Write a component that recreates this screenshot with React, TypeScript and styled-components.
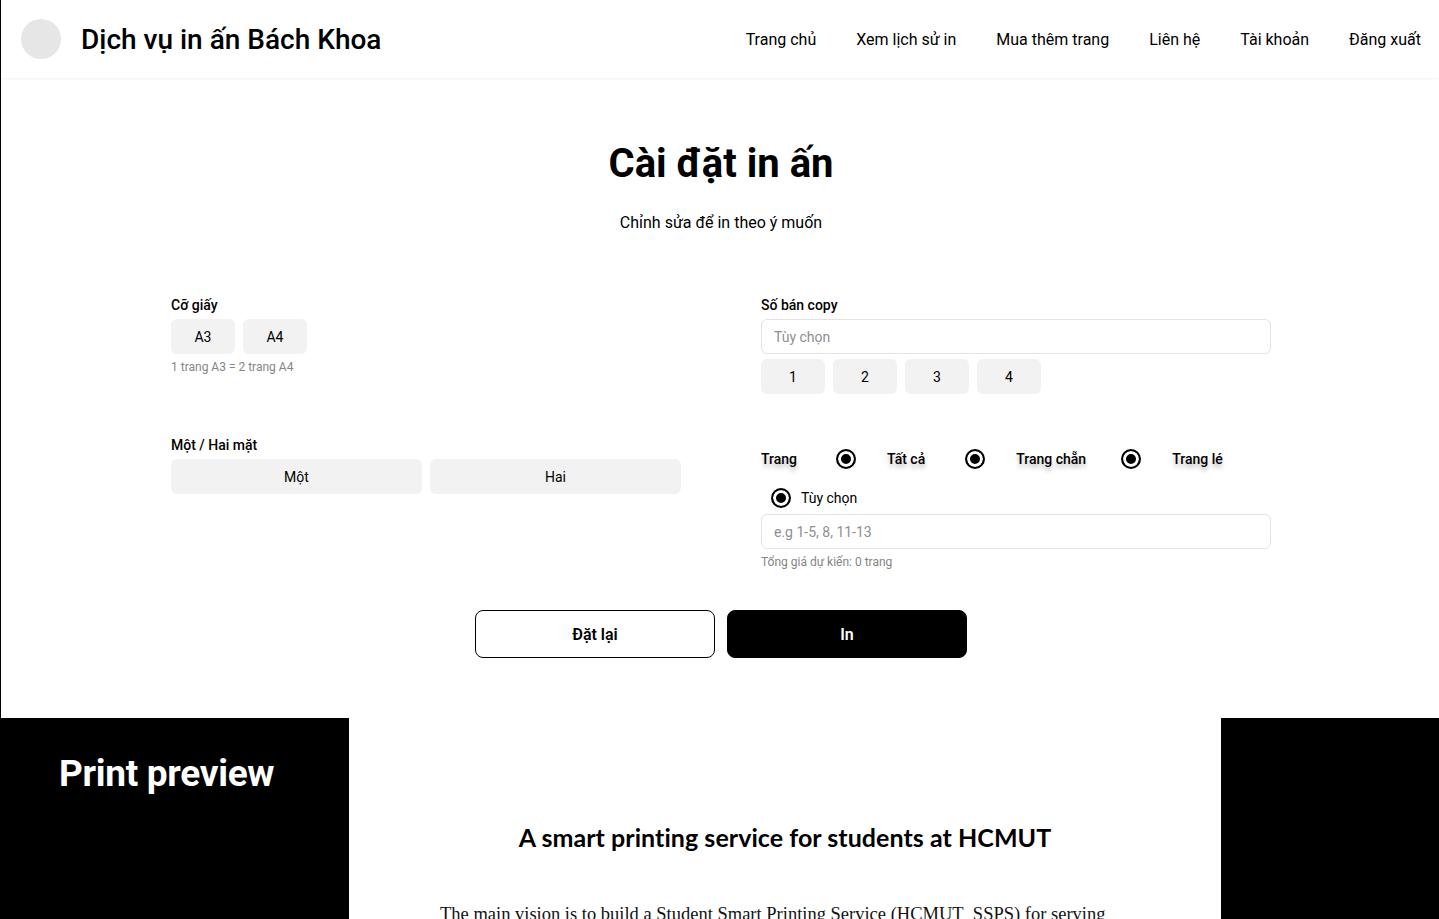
import React from "react";
import styled, { createGlobalStyle } from "styled-components";

const GlobalStyle = createGlobalStyle`
  html, body { margin: 0; padding: 0; background: #fff; }
  body { font-family: Roboto, "Noto Sans", "Liberation Sans", sans-serif; color: #000; }
  * { box-sizing: border-box; }
`;

const Upper = styled.div`
  border-left: 1px solid #000;
`;

const Header = styled.header`
  height: 78px;
  display: flex;
  align-items: center;
  justify-content: space-between;
  padding: 0 18px 0 20px;
  box-shadow: 0 1px 3px rgba(0, 0, 0, 0.06);
`;

const Brand = styled.div`
  display: flex;
  align-items: center;
  gap: 20px;
`;

const Logo = styled.div`
  width: 40px;
  height: 40px;
  border-radius: 50%;
  background: #e6e6e6;
`;

const BrandName = styled.div`
  font-size: 28px;
  font-weight: 500;
`;

const Nav = styled.nav`
  display: flex;
  gap: 40px;
`;

const NavLink = styled.a`
  font-size: 16px;
  color: #000;
  text-decoration: none;
`;

const Main = styled.main`
  display: flex;
  flex-direction: column;
  align-items: center;
  padding: 62px 0 60px 2px;
`;

const Title = styled.h1`
  margin: 0;
  font-size: 40px;
  font-weight: 700;
  line-height: 47px;
`;

const Subtitle = styled.p`
  margin: 26px 0 0;
  font-size: 16px;
  line-height: 19px;
`;

const Form = styled.div`
  margin-top: 65px;
  display: grid;
  grid-template-columns: 510px 510px;
  column-gap: 80px;
`;

const Column = styled.div`
  display: flex;
  flex-direction: column;
`;

const Group = styled.div<{ $top?: number }>`
  display: flex;
  flex-direction: column;
  margin-top: ${(p) => p.$top ?? 0}px;
`;

const Label = styled.div`
  font-size: 14px;
  font-weight: 500;
  line-height: 16px;
  margin-bottom: 6px;
`;

const ButtonRow = styled.div<{ $top?: number }>`
  display: flex;
  gap: 8px;
  margin-top: ${(p) => p.$top ?? 0}px;
`;

const Choice = styled.button<{ $wide?: boolean }>`
  width: ${(p) => (p.$wide ? "251px" : "64px")};
  flex: ${(p) => (p.$wide ? "1" : "none")};
  height: 35px;
  border: none;
  border-radius: 6px;
  background: #f2f2f2;
  font-family: inherit;
  font-size: 14px;
  color: #000;
  padding: 0;
`;

const Hint = styled.div<{ $top?: number }>`
  font-size: 12px;
  line-height: 14px;
  color: #858585;
  margin-top: ${(p) => p.$top ?? 6}px;
`;

const TextInput = styled.input`
  width: 100%;
  height: 35px;
  border: 1px solid #e3e3e3;
  border-radius: 6px;
  padding: 0 12px;
  font-family: inherit;
  font-size: 14px;
  outline: none;
  &::placeholder { color: #8f8f8f; }
`;

const RadioRow = styled.div`
  display: flex;
  align-items: center;
  height: 20px;
`;

const RadioLabel = styled.span<{ $gap?: number }>`
  font-size: 14px;
  font-weight: 500;
  text-shadow: 0 4px 4px rgba(0, 0, 0, 0.25);
  margin-right: ${(p) => p.$gap ?? 0}px;
`;

const Radio = styled.span<{ $after?: number }>`
  width: 20px;
  height: 20px;
  border-radius: 50%;
  border: 2px solid #000;
  background: #000;
  box-shadow: inset 0 0 0 3px #fff;
  margin-right: ${(p) => p.$after ?? 31}px;
  flex: none;
`;

const CustomRow = styled.div`
  display: flex;
  align-items: center;
  margin: 19px 0 6px 10px;
  font-size: 14px;
`;

const Actions = styled.div`
  margin-top: 41px;
  display: flex;
  gap: 12px;
`;

const ActionButton = styled.button<{ $primary?: boolean }>`
  width: 240px;
  height: 48px;
  border-radius: 8px;
  border: 1px solid #000;
  background: ${(p) => (p.$primary ? "#000" : "#fff")};
  color: ${(p) => (p.$primary ? "#fff" : "#000")};
  font-family: inherit;
  font-size: 16px;
  font-weight: 600;
`;

const PreviewSection = styled.section`
  background: #000;
  display: grid;
  grid-template-columns: 349px 872px 1fr;
  height: 420px;
`;

const PreviewTitle = styled.h2`
  margin: 0;
  padding: 34px 0 0 59px;
  color: #fff;
  font-size: 37px;
  font-weight: 700;
  letter-spacing: -0.3px;
`;

const Paper = styled.div`
  background: #fff;
  display: flex;
  flex-direction: column;
  align-items: center;
  padding-top: 104px;
`;

const DocTitle = styled.div`
  font-family: Lato, "Open Sans", sans-serif;
  font-weight: 700;
  font-size: 25px;
  letter-spacing: 0.05px;
`;

const DocBody = styled.div`
  margin-top: 52px;
  font-family: "Liberation Serif", serif;
  font-size: 18.5px;
  color: #111;
  align-self: flex-start;
  padding-left: 91px;
  white-space: nowrap;
`;

export default function App() {
  return (
    <>
      <GlobalStyle />
      <Upper>
        <Header>
          <Brand>
            <Logo />
            <BrandName>Dịch vụ in ấn Bách Khoa</BrandName>
          </Brand>
          <Nav>
            {["Trang chủ", "Xem lịch sử in", "Mua thêm trang", "Liên hệ", "Tài khoản", "Đăng xuất"].map((t) => (
              <NavLink key={t}>{t}</NavLink>
            ))}
          </Nav>
        </Header>
        <Main>
          <Title>Cài đặt in ấn</Title>
          <Subtitle>Chỉnh sửa để in theo ý muốn</Subtitle>
          <Form>
            <Column>
              <Group>
                <Label>Cỡ giấy</Label>
                <ButtonRow>
                  <Choice>A3</Choice>
                  <Choice>A4</Choice>
                </ButtonRow>
                <Hint>1 trang A3 = 2 trang A4</Hint>
              </Group>
              <Group $top={63}>
                <Label>Một / Hai mặt</Label>
                <ButtonRow>
                  <Choice $wide>Một</Choice>
                  <Choice $wide>Hai</Choice>
                </ButtonRow>
              </Group>
            </Column>
            <Column>
              <Group>
                <Label>Số bán copy</Label>
                <TextInput placeholder="Tùy chọn" />
                <ButtonRow $top={5}>
                  <Choice>1</Choice>
                  <Choice>2</Choice>
                  <Choice>3</Choice>
                  <Choice>4</Choice>
                </ButtonRow>
              </Group>
              <Group $top={55}>
                <RadioRow>
                  <RadioLabel $gap={39}>Trang</RadioLabel>
                  <Radio />
                  <RadioLabel $gap={40}>Tất cả</RadioLabel>
                  <Radio />
                  <RadioLabel $gap={35}>Trang chẵn</RadioLabel>
                  <Radio />
                  <RadioLabel>Trang lé</RadioLabel>
                </RadioRow>
                <CustomRow>
                  <Radio $after={10} />
                  <span>Tùy chọn</span>
                </CustomRow>
                <TextInput placeholder="e.g 1-5, 8, 11-13" />
                <Hint $top={6}>Tổng giá dự kiến: 0 trang</Hint>
              </Group>
            </Column>
          </Form>
          <Actions>
            <ActionButton>Đặt lại</ActionButton>
            <ActionButton $primary>In</ActionButton>
          </Actions>
        </Main>
      </Upper>
      <PreviewSection>
        <PreviewTitle>Print preview</PreviewTitle>
        <Paper>
          <DocTitle>A smart printing service for students at HCMUT</DocTitle>
          <DocBody>
            The main vision is to build a Student Smart Printing Service (HCMUT_SSPS) for serving
          </DocBody>
        </Paper>
        <div />
      </PreviewSection>
    </>
  );
}
